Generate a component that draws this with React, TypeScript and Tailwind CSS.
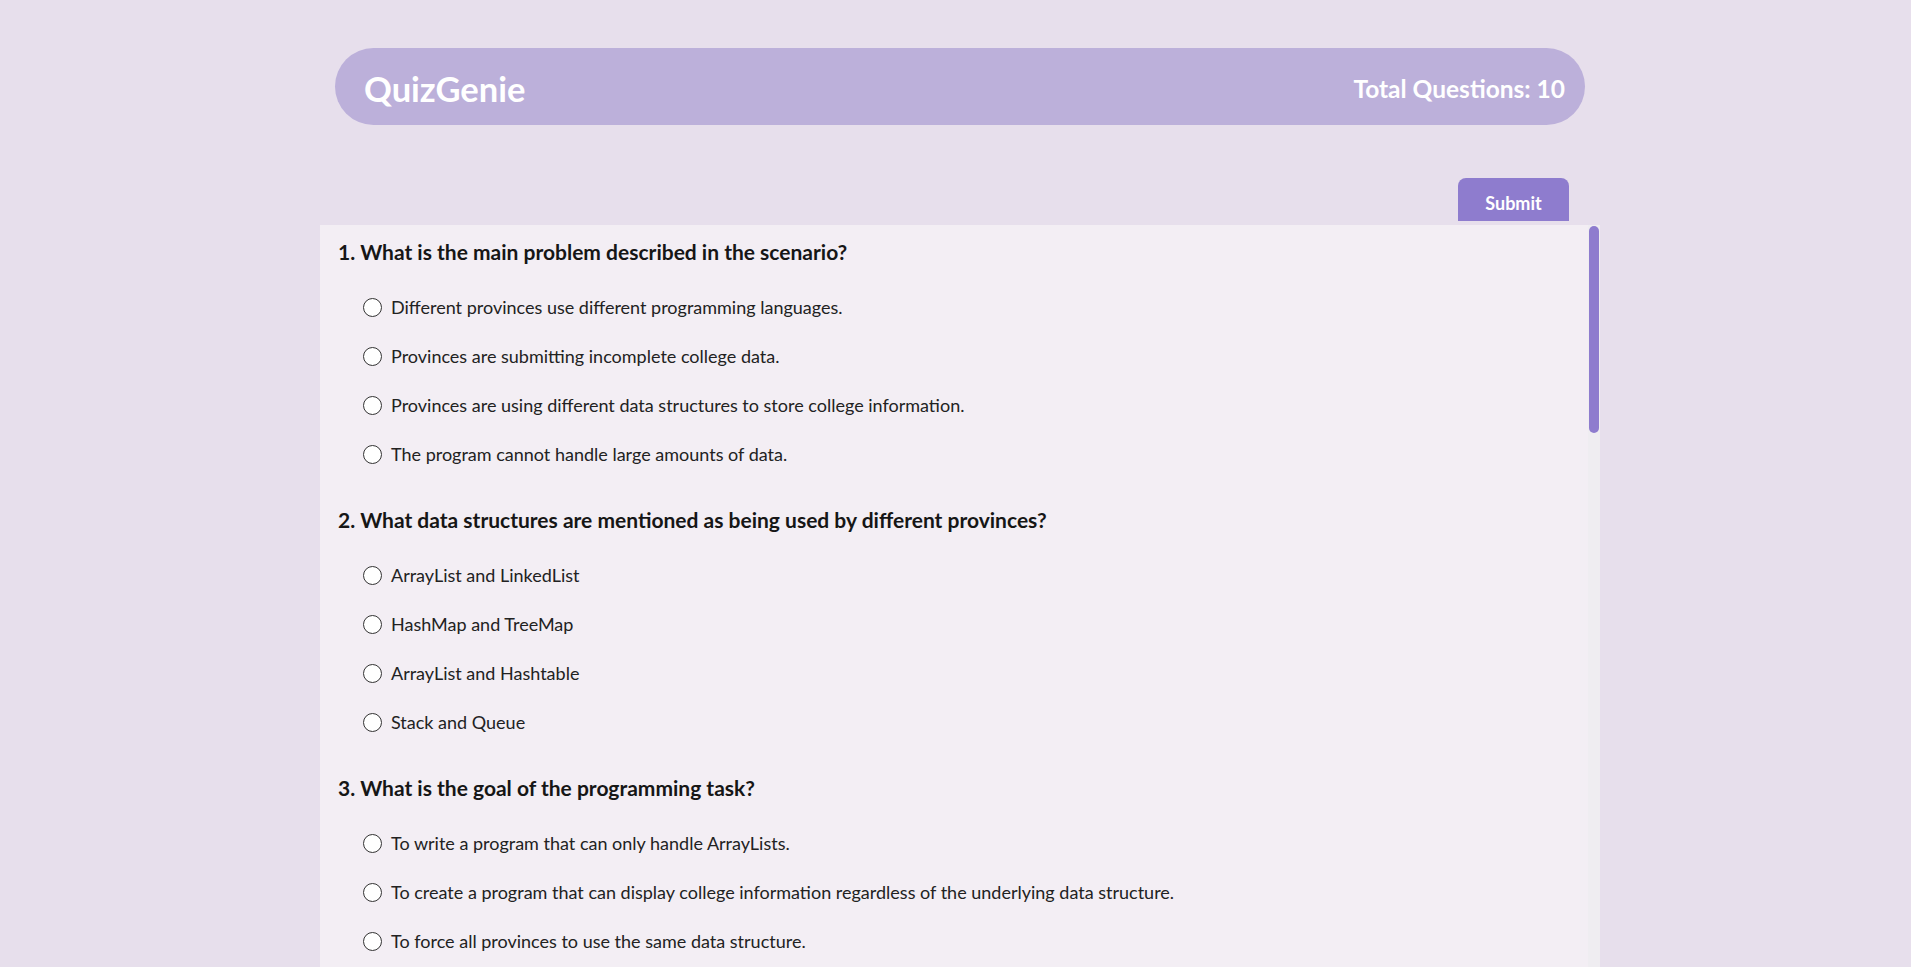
import React from "react";

const questions: { q: string; options: string[] }[] = [
  {
    q: "What is the main problem described in the scenario?",
    options: [
      "Different provinces use different programming languages.",
      "Provinces are submitting incomplete college data.",
      "Provinces are using different data structures to store college information.",
      "The program cannot handle large amounts of data.",
    ],
  },
  {
    q: "What data structures are mentioned as being used by different provinces?",
    options: ["ArrayList and LinkedList", "HashMap and TreeMap", "ArrayList and Hashtable", "Stack and Queue"],
  },
  {
    q: "What is the goal of the programming task?",
    options: [
      "To write a program that can only handle ArrayLists.",
      "To create a program that can display college information regardless of the underlying data structure.",
      "To force all provinces to use the same data structure.",
      "To convert all Hashtables into ArrayLists.",
    ],
  },
  {
    q: "Which design pattern is best suited to solve this problem?",
    options: ["Singleton", "Iterator", "Observer", "Factory"],
  },
  {
    q: "What does the Iterator pattern provide?",
    options: [
      "A way to create objects without specifying their class.",
      "A way to access elements of a collection sequentially without exposing its representation.",
      "A way to notify objects about state changes.",
      "A way to ensure only one instance of a class exists.",
    ],
  },
  {
    q: "Which method is typically used to check if more elements are available?",
    options: ["next()", "hasNext()", "remove()", "size()"],
  },
  {
    q: "Which method returns the next element in the iteration?",
    options: ["get()", "hasNext()", "next()", "peek()"],
  },
  {
    q: "What is the benefit of using a common interface for the collections?",
    options: [
      "It makes the program run faster.",
      "It allows the display code to work with any collection type.",
      "It reduces memory usage.",
      "It removes the need for data validation.",
    ],
  },
  {
    q: "How are elements accessed in a Hashtable through an iterator?",
    options: [
      "By iterating over its keys or values.",
      "By using array indices.",
      "By sorting the table first.",
      "Elements cannot be iterated.",
    ],
  },
  {
    q: "What would happen if a new province used a different data structure?",
    options: [
      "The whole program would need to be rewritten.",
      "Only a new iterator implementation would be needed.",
      "The province would have to change its data structure.",
      "The program would crash.",
    ],
  },
];

export default function App() {
  return (
    <div
      className="h-screen overflow-hidden bg-[#e7dfec] pl-[320px] flex flex-col"
      style={{ fontFamily: "Lato, 'Open Sans', sans-serif" }}
    >
      <div className="w-[1280px] flex flex-col flex-1 min-h-0 pt-[48px]">
        <header className="mx-[15px] h-[77px] rounded-full bg-[#bcb0da] flex items-center justify-between pl-[29px] pr-[20px] pt-[6px]">
          <h1 className="text-[34.5px] font-bold text-white leading-none">QuizGenie</h1>
          <div className="text-[24.5px] font-bold text-white leading-none">Total Questions: 10</div>
        </header>
        <div className="flex justify-end pr-[31px] mt-[53px] mb-[4px]">
          <button className="w-[111px] h-[43px] pt-[8px] rounded-t-lg bg-[#8e7cce] text-white font-bold text-[18px]">
            Submit
          </button>
        </div>
        <div className="relative flex-1 min-h-0">
          <div className="h-full overflow-y-auto bg-[#f3eef4] pl-[18px] pt-[13px]">
            <div className="flex flex-col gap-[40px] pb-[40px]">
              {questions.map((item, i) => (
                <div key={i} className="flex flex-col">
                  <h2 className="text-[21px] font-bold text-[#161616] leading-[28px] mb-[29px]">
                    {i + 1}. {item.q}
                  </h2>
                  <div className="flex flex-col gap-[25px] pl-[25px]">
                    {item.options.map((opt, j) => (
                      <label
                        key={j}
                        className="flex items-center gap-[9px] h-[24px] text-[18px] text-[#222] leading-[24px]"
                      >
                        <span className="w-[19px] h-[19px] rounded-full border-[1.5px] border-[#333] bg-white shrink-0" />
                        <span>{opt}</span>
                      </label>
                    ))}
                  </div>
                </div>
              ))}
            </div>
          </div>
          <div className="absolute top-0 right-0 bottom-0 w-[12px] bg-[#efedf1]">
            <div className="mt-[1px] ml-[1px] w-[10px] h-[207px] rounded-full bg-[#8e7cce]" />
          </div>
        </div>
      </div>
    </div>
  );
}
